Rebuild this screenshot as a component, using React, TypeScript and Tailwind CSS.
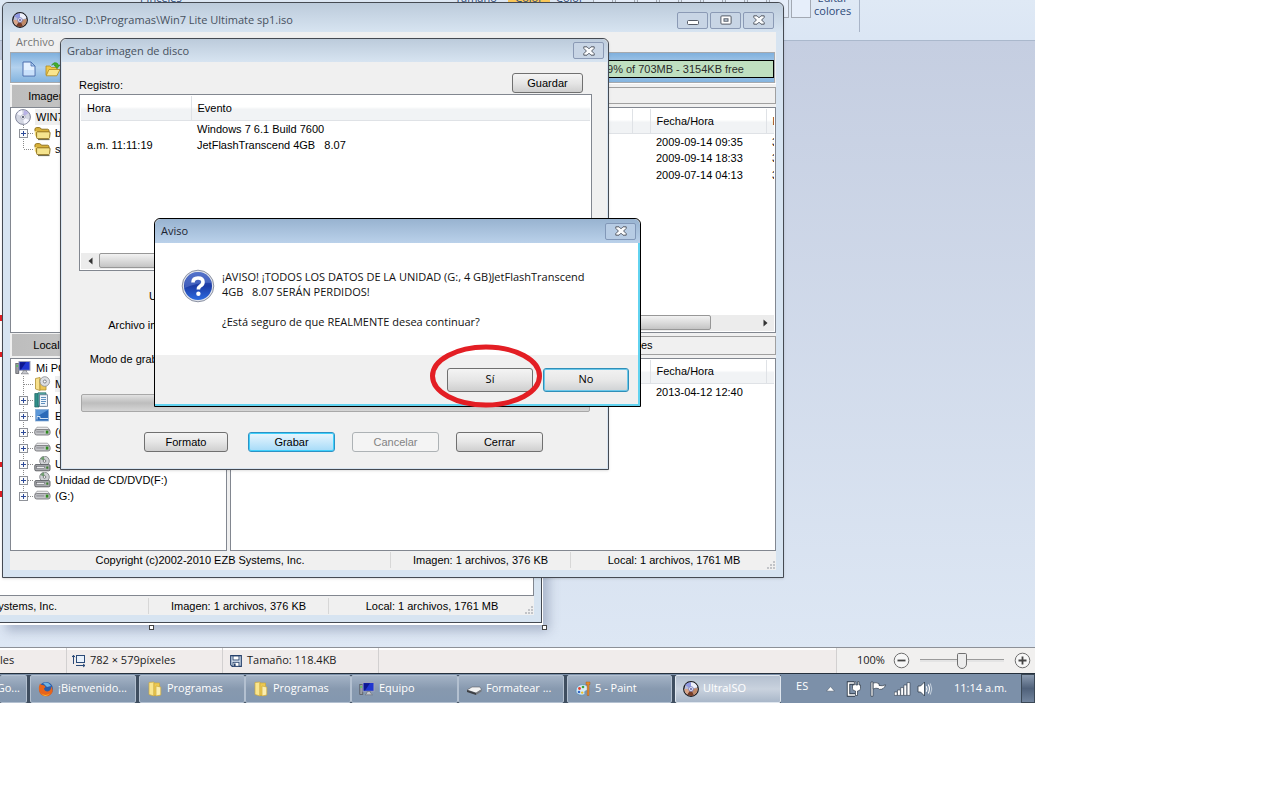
import type { ReactNode } from "react";

const SEGOE = "font-['Open_Sans','Noto_Sans',sans-serif]";
const MSSANS = "font-['Liberation_Sans',Arial,sans-serif]";

/* ---------- icons ---------- */

function DiscAppIcon() {
  return (
    <svg width="16" height="16" viewBox="0 0 16 16" className="shrink-0" aria-hidden="true">
      <circle cx="8" cy="8" r="7.3" fill="#b9bdd6" stroke="#1b1b1f" strokeWidth="1.3" />
      <path d="M8 8 L2 4 A7 7 0 0 1 8 1.2 Z" fill="#8e97e0" />
      <path d="M8 8 L8 1.2 A7 7 0 0 1 14.5 6 Z" fill="#eef0fa" />
      <path d="M8 8 L14.6 7 A7 7 0 0 1 11 14 Z" fill="#c08a68" />
      <path d="M8 8 L11 14.3 A7 7 0 0 1 4 13.5 Z" fill="#7a3f27" />
      <path d="M8 8 L4 13.5 A7 7 0 0 1 1.3 8 Z" fill="#d9a587" />
      <circle cx="8" cy="8" r="2.4" fill="#e9e9f8" stroke="#7276b8" strokeWidth="0.8" />
      <circle cx="8" cy="8" r="0.9" fill="#4f539a" />
    </svg>
  );
}

function DiscIcon() {
  return (
    <svg width="16" height="16" viewBox="0 0 16 16" className="shrink-0" aria-hidden="true">
      <circle cx="8" cy="8" r="7.4" fill="#d3d6e2" stroke="#80849a" strokeWidth="1" />
      <path d="M8 8 L2 5 A7 7 0 0 1 7 1.2 Z" fill="#f7f7ff" />
      <path d="M8 8 L14 11 A7 7 0 0 1 9 14.8 Z" fill="#f7f7ff" />
      <path d="M8 8 L9 1.2 A7 7 0 0 1 13.5 4 Z" fill="#b9b2e6" />
      <circle cx="8" cy="8" r="2.2" fill="#fff" stroke="#9a9cb2" strokeWidth="0.7" />
      <circle cx="8" cy="8" r="1" fill="#333a55" />
    </svg>
  );
}

function FolderIcon() {
  return (
    <svg width="17" height="16" viewBox="0 0 17 16" className="shrink-0" aria-hidden="true">
      <path d="M0.8 5 Q0.8 2.6 2.6 2.6 H5.4 Q6.6 2.6 7.4 4.2 H13.6 Q15 4.2 15 5.8 V11 H3 Z" fill="#d9b23a" stroke="#8a6b17" strokeWidth="0.9" />
      <path d="M0.8 6 V9.5 Q1 11.6 3 12 L3 6 Z" fill="#f1d875" />
      <path d="M3.2 6.8 H15 Q16.2 6.8 16.1 8 L15.6 12.4 Q15.5 13.6 14.3 13.6 H3.8 Q2.6 13.6 2.6 12.4 V7.4 Q2.6 6.8 3.2 6.8 Z" fill="#f5e48e" stroke="#8a6b17" strokeWidth="0.9" />
      <path d="M4 14.6 H15.5" stroke="#55502f" strokeWidth="0.9" />
    </svg>
  );
}

function DriveIcon() {
  return (
    <svg width="17" height="16" viewBox="0 0 17 16" className="shrink-0" aria-hidden="true">
      <path d="M3 3.2 H13.5 L16 6.2 H0.8 Z" fill="#ececee" stroke="#8a8a8e" strokeWidth="0.7" />
      <rect x="0.7" y="5.6" width="15.4" height="5.4" rx="2" fill="#c4c5c9" stroke="#67686c" strokeWidth="0.8" />
      <rect x="2.3" y="7.2" width="8" height="1.4" fill="#97989d" />
      <rect x="11.8" y="6.6" width="2.6" height="3" fill="#2f8a1e" />
    </svg>
  );
}

function CdDriveIcon() {
  return (
    <svg width="17" height="16" viewBox="0 0 17 16" className="shrink-0" aria-hidden="true">
      <circle cx="10.5" cy="5" r="4.8" fill="#cfd1d4" stroke="#77797e" strokeWidth="0.8" />
      <path d="M10.5 5 L6.5 3 A4.5 4.5 0 0 1 10 0.6 Z" fill="#6f9c6f" />
      <circle cx="10.5" cy="5" r="1.3" fill="#fff" stroke="#55575c" strokeWidth="0.7" />
      <rect x="0.8" y="8.6" width="15.2" height="6.2" rx="1.2" fill="#a9abaf" stroke="#56585c" strokeWidth="0.9" />
      <rect x="2.5" y="10.5" width="8" height="2.2" fill="#ececee" stroke="#55575c" strokeWidth="0.5" />
      <rect x="12.3" y="10.5" width="2" height="2.2" fill="#3b7f2d" />
    </svg>
  );
}

function DiscFolderIcon() {
  return (
    <svg width="17" height="16" viewBox="0 0 17 16" className="shrink-0" aria-hidden="true">
      <path d="M1.5 2.5 L6 1.5 V14.5 L1.5 13 Z" fill="#f7e08c" stroke="#b08f33" strokeWidth="0.8" />
      <path d="M6 3 H12 V14 H6 Z" fill="#ecc552" stroke="#b08f33" strokeWidth="0.8" />
      <circle cx="10.8" cy="5.5" r="4.8" fill="#dcdee2" stroke="#898b90" strokeWidth="0.8" />
      <circle cx="10.8" cy="5.5" r="1.5" fill="#fff" stroke="#66686d" strokeWidth="0.8" />
    </svg>
  );
}

function DocsIcon() {
  return (
    <svg width="17" height="16" viewBox="0 0 17 16" className="shrink-0" aria-hidden="true">
      <path d="M0.8 1.5 H5 V15 H0.8 Z" fill="#2f8f8a" stroke="#1f6662" strokeWidth="0.7" />
      <path d="M4 0.8 H12 V14 H4 Z" fill="#59b1ab" stroke="#1f6662" strokeWidth="0.7" />
      <rect x="5.5" y="2.8" width="8" height="11.5" fill="#eef5fb" stroke="#60738a" strokeWidth="0.8" />
      <path d="M7 5.5 H12 M7 7.5 H12 M7 9.5 H12 M7 11.5 H11" stroke="#4e84b8" strokeWidth="0.9" />
    </svg>
  );
}

function DesktopIcon() {
  return (
    <svg width="17" height="16" viewBox="0 0 17 16" className="shrink-0" aria-hidden="true">
      <rect x="1.5" y="1.5" width="13" height="11.5" fill="#2a6ab8" stroke="#8eb2d8" strokeWidth="0.8" />
      <path d="M2 2 H14 L2 9 Z" fill="#5b97d8" />
      <path d="M3 11.5 V8.5 H6 V10.5 H14" stroke="#cfe2f4" strokeWidth="1" fill="none" />
    </svg>
  );
}

function ComputerIcon() {
  return (
    <svg width="16" height="16" viewBox="0 0 16 16" className="shrink-0" aria-hidden="true">
      <rect x="0.8" y="3.5" width="3" height="10" fill="#9b9da3" stroke="#4f5158" strokeWidth="0.7" />
      <rect x="4" y="1.5" width="11" height="8.8" fill="#1f36d0" stroke="#9fa3b8" strokeWidth="1" />
      <path d="M4.8 2.2 H11 L6 9.5 H4.8 Z" fill="#0d1890" />
      <path d="M8 10.5 H11.5 V12 L13.5 13.8 H6 L8 12 Z" fill="#c6c8ce" stroke="#6d6f76" strokeWidth="0.6" />
      <rect x="1.5" y="5" width="1.2" height="2" fill="#49d04a" />
    </svg>
  );
}

function NewDocIcon() {
  return (
    <svg width="14" height="16" viewBox="0 0 14 16" className="shrink-0" aria-hidden="true">
      <path d="M1 1 H9 L13 5 V15 H1 Z" fill="#e4f1ff" stroke="#4a6fae" strokeWidth="1" />
      <path d="M9 1 V5 H13 Z" fill="#a9c9ee" stroke="#4a6fae" strokeWidth="0.8" />
      <path d="M2 9 H12 V14 H2 Z" fill="#c9e1fb" />
    </svg>
  );
}

function OpenFolderIcon() {
  return (
    <svg width="17" height="16" viewBox="0 0 17 16" className="shrink-0" aria-hidden="true">
      <path d="M1 5 H5 L6.5 6.5 H12 V14 H1 Z" fill="#efc94e" stroke="#b18b20" strokeWidth="0.8" />
      <path d="M4 8.5 H15 L11.8 14.8 H1.2 Z" fill="#fae58d" stroke="#b18b20" strokeWidth="0.8" />
      <path d="M6.5 4.2 Q8.5 0.4 12 2 Q13 2.6 13.2 4 H15 L12 7.6 L9 4 H10.8 Q9.5 2.6 6.5 4.2 Z" fill="#43b32c" stroke="#28831a" strokeWidth="0.5" />
    </svg>
  );
}

function QuestionIcon() {
  return (
    <svg width="34" height="34" viewBox="0 0 34 34" className="shrink-0" aria-hidden="true">
      <defs>
        <linearGradient id="qg" x1="0" y1="0" x2="0" y2="1">
          <stop offset="0" stopColor="#3d5fc0" />
          <stop offset="0.5" stopColor="#1c3ca6" />
          <stop offset="1" stopColor="#2c6be0" />
        </linearGradient>
      </defs>
      <circle cx="17" cy="17" r="15.8" fill="#dfe3ec" stroke="#8d93a3" strokeWidth="1" />
      <circle cx="17" cy="17" r="14" fill="url(#qg)" />
      <path d="M3.5 15 A13.7 13.7 0 0 1 30.5 14 Q18 13 3.5 19 Z" fill="#6f8ad6" opacity="0.45" />
      <path d="M12 13.5 Q12 9 17 9 Q22 9 22 13 Q22 15.5 19.3 17 Q17.4 18.2 17.4 20.5" fill="none" stroke="#fff" strokeWidth="3.6" />
      <circle cx="17.4" cy="24.8" r="2.2" fill="#fff" />
    </svg>
  );
}

function FirefoxIcon() {
  return (
    <svg width="16" height="16" viewBox="0 0 16 16" className="shrink-0" aria-hidden="true">
      <circle cx="8" cy="8" r="7" fill="#2b5ca8" />
      <path d="M5 2 A7 7 0 0 1 13 5 L9 6 Z" fill="#6fb2e2" />
      <path d="M2 2.5 Q3 4 4.5 4 Q6.5 4 7.5 6 L6 7.5 Q6.5 10.5 9.5 10.5 Q13 10 13.2 5.5 Q15.8 9 14 12 Q11.5 15.8 7.5 15.3 Q2 14.6 1 9.5 Q0.4 5.5 2 2.5 Z" fill="#e8641b" />
      <path d="M3 12 Q7 15.5 12 12.6 Q9 16 5.5 14.6 Z" fill="#f7b52c" />
    </svg>
  );
}

function TaskFolderIcon() {
  return (
    <svg width="16" height="16" viewBox="0 0 16 16" className="shrink-0" aria-hidden="true">
      <path d="M2 1.5 L7 1 V15 L2 13.5 Z" fill="#f9e58e" stroke="#cda93c" strokeWidth="0.7" />
      <path d="M7 2 H12.5 V14.5 H7 Z" fill="#edc951" stroke="#cda93c" strokeWidth="0.7" />
      <path d="M9 5 L13.8 6 V14 L9 15 Z" fill="#fbeeb0" stroke="#cda93c" strokeWidth="0.7" />
    </svg>
  );
}

function TaskDriveIcon() {
  return (
    <svg width="16" height="16" viewBox="0 0 16 16" className="shrink-0" aria-hidden="true">
      <path d="M1 9 L6 6 H14 L15.5 8.5 L10 12 Z" fill="#f2f2f2" stroke="#5a5d62" strokeWidth="0.6" />
      <path d="M1 9 L10 12 V14 L1 11 Z" fill="#3c3f44" />
      <path d="M10 12 L15.5 8.5 V10.5 L10 14 Z" fill="#75787d" />
    </svg>
  );
}

function PaintIcon() {
  return (
    <svg width="16" height="16" viewBox="0 0 16 16" className="shrink-0" aria-hidden="true">
      <path d="M1 10 Q1 4 7.5 3.5 Q13 3.5 13 8 Q13 10 10.5 10 Q9 10.5 10 12 Q10.5 14 7 14.2 Q1 14 1 10 Z" fill="#d8ebf6" stroke="#5d93b7" strokeWidth="0.8" />
      <circle cx="4.5" cy="7.5" r="1.4" fill="#e04331" />
      <circle cx="8" cy="6" r="1.3" fill="#3ca43a" />
      <circle cx="4" cy="11" r="1.3" fill="#3166c9" />
      <circle cx="7.2" cy="11.6" r="1.2" fill="#efc22c" />
      <path d="M11 1 H15 V3.5 H14 V14.5 H12.2 V3.5 H11 Z" fill="#e58a2d" stroke="#9c5713" strokeWidth="0.4" />
    </svg>
  );
}

function SizeIcon() {
  return (
    <svg width="14" height="14" viewBox="0 0 14 14" className="shrink-0" aria-hidden="true">
      <rect x="4.5" y="1.5" width="8" height="7" fill="#e8f1fb" stroke="#2a4a78" strokeWidth="1" />
      <path d="M1.5 10 V1.5 M0 3.2 L1.5 1.2 L3 3.2 M4 11.5 H13 M11 10 L13 11.5 L11 13" fill="none" stroke="#2a4a78" strokeWidth="1" />
    </svg>
  );
}

function SaveIcon() {
  return (
    <svg width="12" height="12" viewBox="0 0 12 12" className="shrink-0" aria-hidden="true">
      <path d="M0.7 0.7 H11.3 V11.3 H2.2 L0.7 9.8 Z" fill="#dbe7f5" stroke="#27426c" strokeWidth="1.2" />
      <rect x="3" y="1" width="6" height="4" fill="#fff" stroke="#27426c" strokeWidth="0.9" />
      <rect x="3" y="7.3" width="6" height="4" fill="#fff" stroke="#27426c" strokeWidth="0.9" />
      <rect x="4" y="8.5" width="1.6" height="2.5" fill="#27426c" />
    </svg>
  );
}

function CloseGlyph() {
  return (
    <svg width="12" height="10" viewBox="0 0 12 10" aria-hidden="true">
      <path
        d="M0.8 0.8 H4 L6 2.8 L8 0.8 H11.2 V2.4 L8.6 5 L11.2 7.6 V9.2 H8 L6 7.2 L4 9.2 H0.8 V7.6 L3.4 5 L0.8 2.4 Z"
        fill="#fbfcfd"
        stroke="#555b66"
        strokeWidth="1"
      />
    </svg>
  );
}

function MinGlyph() {
  return (
    <svg width="12" height="10" viewBox="0 0 12 10" aria-hidden="true">
      <rect x="0.5" y="5.5" width="11" height="4" rx="1" fill="#fff" stroke="#555b66" />
    </svg>
  );
}

function MaxGlyph() {
  return (
    <svg width="12" height="10" viewBox="0 0 12 10" aria-hidden="true">
      <rect x="0.9" y="0.9" width="10.2" height="8.2" rx="1" fill="#fff" stroke="#555b66" />
      <rect x="4" y="3.8" width="4" height="2.4" fill="#c7d4e3" stroke="#555b66" />
    </svg>
  );
}

function Grip() {
  return (
    <svg width="9" height="9" viewBox="0 0 9 9" className="shrink-0" aria-hidden="true">
      <path
        d="M6 0h2v2h-2z M6 3h2v2h-2z M3 3h2v2h-2z M6 6h2v2h-2z M3 6h2v2h-2z M0 6h2v2h-2z"
        fill="#c2c4c8"
      />
    </svg>
  );
}

/* ---------- window parts ---------- */

function CaptionButton({ label, active, children }: { label: string; active?: boolean; children: ReactNode }) {
  return (
    <button
      aria-label={label}
      className={`flex h-[17px] w-[31px] items-center justify-center rounded-xs border ${
        active ? "border-[#8298b8] bg-[#b7cce4]" : "border-[#8b9ab5] bg-[#c8d5e5]"
      }`}
    >
      {children}
    </button>
  );
}

function PushButton({
  children,
  width,
  look = "normal",
  height = "h-5",
}: {
  children: ReactNode;
  width: string;
  look?: "normal" | "pressed" | "default" | "disabled";
  height?: string;
}) {
  const looks = {
    normal: "border-[#707070] bg-linear-to-b from-[#f4f4f4] via-[#e6e6e6] to-[#cfcfcf] text-black",
    pressed: "border-[#2c92c5] ring-1 ring-inset ring-[#3fd0fb] bg-linear-to-b from-[#eaf6fd] to-[#a5dbf8] text-black",
    default: "border-[#2f8fb8] ring-1 ring-inset ring-[#6cc8ea] bg-linear-to-b from-[#f2f2f2] via-[#e8e8e8] to-[#cfd2d4] text-black",
    disabled: "border-[#adb2b5] bg-[#f4f4f4] text-[#838383]",
  };
  return (
    <button
      disabled={look === "disabled"}
      className={`flex ${height} ${width} items-center justify-center rounded-[3px] border ${looks[look]}`}
    >
      {children}
    </button>
  );
}

function ScrollBar({ thumb }: { thumb: string }) {
  return (
    <div className="flex h-4 items-stretch bg-[#ececec]">
      <button aria-label="Desplazar a la izquierda" className="flex w-[18px] items-center justify-center">
        <svg width="5" height="8" viewBox="0 0 5 8" aria-hidden="true">
          <path d="M4.5 0.5 V7.5 L0.5 4 Z" fill="#333" />
        </svg>
      </button>
      <div className="flex-1">
        <div
          className={`h-[15px] rounded-xs border border-[#979797] bg-linear-to-b from-[#f2f2f2] via-[#dcdcdc] to-[#c4c4c4] ${thumb}`}
        />
      </div>
      <button aria-label="Desplazar a la derecha" className="flex w-[18px] items-center justify-center">
        <svg width="5" height="8" viewBox="0 0 5 8" aria-hidden="true">
          <path d="M0.5 0.5 V7.5 L4.5 4 Z" fill="#333" />
        </svg>
      </button>
    </div>
  );
}

type Column = { title: string; width: string };

function ListView({ columns, rows, label }: { columns: Column[]; rows: string[][]; label: string }) {
  return (
    <table aria-label={label} className="w-full table-fixed border-collapse text-left">
      <thead>
        <tr className="h-[24px]">
          {columns.map((c, i) => (
            <th
              key={i}
              className={`${c.width} overflow-hidden border-r border-b border-[#dfe2e6] bg-linear-to-b from-white from-45% to-[#f1f3f5] to-55% p-0 pl-[6px] font-normal whitespace-nowrap last:border-r-0`}
            >
              {c.title}
            </th>
          ))}
        </tr>
      </thead>
      <tbody>
        {rows.map((r, i) => (
          <tr key={i} className="h-[17px]">
            {r.map((cell, j) => (
              <td key={j} className="overflow-hidden p-0 pl-[6px] whitespace-pre">
                {cell}
              </td>
            ))}
          </tr>
        ))}
      </tbody>
    </table>
  );
}

type Node = { text: string; icon: ReactNode; expandable?: boolean; selected?: boolean };

function Tree({ root, rootIcon, rootSelected, nodes }: { root: string; rootIcon: ReactNode; rootSelected?: boolean; nodes: Node[] }) {
  return (
    <ul className="pt-px leading-4 whitespace-nowrap">
      <li className="flex h-4 items-center gap-1 pl-1">
        {rootIcon}
        <span className={rootSelected ? "bg-[#efefef] px-px" : "px-px"}>{root}</span>
      </li>
      {nodes.map((n, i) => (
        <li key={i} className="flex h-4 items-center pl-2">
          <svg width="15" height="16" viewBox="0 0 15 16" className="shrink-0" aria-hidden="true">
            <path
              d={i === nodes.length - 1 ? "M4.5 0 V8" : "M4.5 0 V16"}
              stroke="#8a8a8a"
              strokeDasharray="1 1"
            />
            <path d="M5 8.5 H15" stroke="#8a8a8a" strokeDasharray="1 1" />
            {n.expandable && (
              <>
                <rect x="0.5" y="4.5" width="8" height="8" fill="#fbfbfb" stroke="#8f9299" />
                <path d="M2 8.5 H7 M4.5 6 V11" stroke="#2d4a98" />
              </>
            )}
          </svg>
          {n.icon}
          <span className={`ml-1 ${n.selected ? "bg-[#efefef]" : ""}`}>{n.text}</span>
        </li>
      ))}
    </ul>
  );
}

function StatusCells({ cells }: { cells: { text: string; width: string }[] }) {
  return (
    <div className="flex h-[19px] items-center bg-[#f0f0f0]">
      {cells.map((c, i) => (
        <div
          key={i}
          className={`h-4 border-r border-[#d7d7d7] text-center leading-4 whitespace-nowrap last-of-type:border-r-0 ${c.width}`}
        >
          {c.text}
        </div>
      ))}
      <span className="-ml-[10px] self-end">
        <Grip />
      </span>
    </div>
  );
}

/* ---------- windows ---------- */

function MainWindow() {
  const sections = [
    {
      title: "Imagen:",
      path: "",
      box: "h-[226px]",
      tree: (
        <Tree
          root="WIN7LITE"
          rootSelected
          rootIcon={<DiscIcon />}
          nodes={[
            { text: "boot", icon: <FolderIcon />, expandable: true },
            { text: "sources", icon: <FolderIcon /> },
          ]}
        />
      ),
      rows: [
        ["", "", "2009-09-14 09:35", "3"],
        ["", "", "2009-09-14 18:33", "3"],
        ["", "", "2009-07-14 04:13", "3"],
      ],
      last: "LBA",
      scroll: true,
    },
    {
      title: "Local:",
      path: "es",
      box: "h-[193px]",
      tree: (
        <Tree
          root="Mi PC"
          rootIcon={<ComputerIcon />}
          nodes={[
            { text: "Mis", icon: <DiscFolderIcon />, selected: true },
            { text: "Mis", icon: <DocsIcon />, expandable: true },
            { text: "Esc", icon: <DesktopIcon />, expandable: true },
            { text: "(C:)", icon: <DriveIcon />, expandable: true },
            { text: "Sis", icon: <DriveIcon />, expandable: true },
            { text: "Uni", icon: <CdDriveIcon />, expandable: true },
            { text: "Unidad de CD/DVD(F:)", icon: <CdDriveIcon />, expandable: true },
            { text: "(G:)", icon: <DriveIcon />, expandable: true },
          ]}
        />
      ),
      rows: [["", "", "2013-04-12 12:40", ""]],
      last: "",
      scroll: false,
    },
  ];

  return (
    <section
      aria-label="UltraISO"
      className="absolute top-[2px] left-[2px] flex h-[576px] w-[782px] flex-col rounded-t-md border border-[#454a52] bg-[#d7e4f1] px-[7px] pb-[7px] shadow-sm"
    >
      <header className={`-mx-[7px] flex h-[29px] shrink-0 items-center gap-[5px] rounded-t-md bg-linear-to-b from-[#bccbdb] to-[#d7e4f1] px-[9px] pt-[5px] text-xs text-[#47515e] ${SEGOE}`}>
        <DiscAppIcon />
        <h1 className="flex-1 text-[11px] leading-4">UltraISO - D:\Programas\Win7 Lite Ultimate sp1.iso</h1>
        <div className="flex gap-[2px]">
          <CaptionButton label="Minimizar"><MinGlyph /></CaptionButton>
          <CaptionButton label="Maximizar"><MaxGlyph /></CaptionButton>
          <CaptionButton label="Cerrar"><CloseGlyph /></CaptionButton>
        </div>
      </header>
      <div className="flex flex-1 flex-col overflow-hidden bg-[#f0f0f0]">
        <nav className={`flex h-[19px] items-center gap-4 px-[6px] text-[11px] leading-4 text-[#757575] ${SEGOE}`}>
          {["Archivo", "Acciones", "Arranque", "Herramientas", "Opciones", "Ayuda"].map((m) => (
            <a key={m} href="#">{m}</a>
          ))}
        </nav>
        <div className="mt-px mr-px flex h-[31px] items-center gap-[9px] border border-[#a5a9ae] bg-linear-to-b from-[#7fb0dd] via-[#b4d2ee] to-[#84b4df] pt-[2px] pl-[11px]">
          <button aria-label="Nuevo"><NewDocIcon /></button>
          <button aria-label="Abrir"><OpenFolderIcon /></button>
          <div className="ml-auto h-[18px] w-[300px] border border-black bg-[#bfdfc0] pr-[29px] text-right leading-4 text-[#2b2b2b]">
            99% of 703MB - 3154KB free
          </div>
        </div>
        <div className="h-px bg-white" />
        {sections.map((s) => (
          <div key={s.title} className="grid grid-cols-[217px_1fr] gap-x-[3px]">
            <h2 className="mt-px ml-[2px] flex h-[22px] items-center bg-linear-to-r from-[#bdbdbd] to-[#d4d4d4]">
              <span className="w-[72px] text-center">{s.title}</span>
            </h2>
            <div className="my-[3px] flex items-center border border-[#a0a0a0] bg-[#f0f0f0] pl-[410px]">
              {s.path}
            </div>
            <div className={`overflow-hidden border border-[#828790] bg-white ${s.box}`}>{s.tree}</div>
            <div className={`flex flex-col justify-between overflow-hidden border border-[#828790] bg-white p-px ${s.box}`}>
              <ListView
                label={s.title}
                columns={[
                  { title: "", width: "w-[400px]" },
                  { title: "", width: "w-[18px]" },
                  { title: "Fecha/Hora", width: "w-[116px]" },
                  { title: s.last, width: "w-auto" },
                ]}
                rows={s.rows}
              />
              {s.scroll && <ScrollBar thumb="w-[461px]" />}
            </div>
          </div>
        ))}
        <StatusCells
          cells={[
            { text: "Copyright (c)2002-2010 EZB Systems, Inc.", width: "w-[381px]" },
            { text: "Imagen: 1 archivos, 376 KB", width: "w-[180px]" },
            { text: "Local: 1 archivos, 1761 MB", width: "flex-1" },
          ]}
        />
      </div>
    </section>
  );
}

function BurnDialog() {
  return (
    <section
      aria-label="Grabar imagen de disco"
      className="absolute top-[38px] left-[60px] flex h-[432px] w-[549px] flex-col rounded-t-md border border-[#454a52] bg-[#f0f0f0] shadow-sm"
    >
      <header className={`flex h-[23px] shrink-0 items-center justify-between rounded-t-md bg-linear-to-b from-[#bccbdb] to-[#d7e4f1] pr-1 pl-[6px] text-[#47515e] ${SEGOE}`}>
        <h2 className="text-[11px] leading-4">Grabar imagen de disco</h2>
        <CaptionButton label="Cerrar"><CloseGlyph /></CaptionButton>
      </header>
      <div className="flex flex-1 flex-col border-x border-b border-[#d7e4f1] px-[17px]">
        <div className="flex h-8 items-end justify-between pr-[7px]">
          <span className="pb-px leading-4">Registro:</span>
          <div className="pb-px">
            <PushButton width="w-[71px]">Guardar</PushButton>
          </div>
        </div>
        <div className="flex h-[177px] w-[513px] flex-col justify-between border border-[#828790] bg-white p-px">
          <ListView
            label="Registro"
            columns={[
              { title: "Hora", width: "w-[110px]" },
              { title: "Evento", width: "w-auto" },
            ]}
            rows={[
              ["", "Windows 7 6.1 Build 7600"],
              ["a.m. 11:11:19", "JetFlashTranscend 4GB   8.07"],
            ]}
          />
          <ScrollBar thumb="w-[440px]" />
        </div>
        <div className="flex h-[123px] w-[108px] flex-col items-end pt-[17px] leading-4 whitespace-nowrap">
          <span>Unidad:</span>
          <span className="mt-[13px]">Archivo imagen:</span>
          <span className="mt-[18px]">Modo de grabación:</span>
        </div>
        <div className="ml-[2px] h-[18px] w-[509px] rounded-xs border border-[#a8a8a8] bg-linear-to-b from-[#e2e2e2] via-[#bdbdbd] to-[#d6d6d6]" />
        <div className="mt-5 flex pl-[65px]">
          <PushButton width="w-[84px]">Formato</PushButton>
          <div className="ml-5 flex gap-[17px]">
            <PushButton width="w-[87px]" look="pressed">Grabar</PushButton>
            <PushButton width="w-[87px]" look="disabled">Cancelar</PushButton>
            <PushButton width="w-[87px]">Cerrar</PushButton>
          </div>
        </div>
      </div>
    </section>
  );
}

function WarningDialog() {
  return (
    <section
      role="dialog"
      aria-label="Aviso"
      className={`absolute top-[218px] left-[154px] flex h-[189px] w-[487px] flex-col rounded-t-md border border-black bg-[#f0f0f0] text-[11px] ${SEGOE}`}
    >
      <header className="flex h-6 shrink-0 items-center justify-between rounded-t-md bg-linear-to-b from-[#98b3d0] to-[#bad1ea] pr-1 pl-[6px] text-[#1c2430]">
        <h2 className="leading-4">Aviso</h2>
        <CaptionButton label="Cerrar" active><CloseGlyph /></CaptionButton>
      </header>
      <div className="flex flex-1 flex-col border-r-2 border-b-2 border-[#62d3f0]">
        <div className="flex h-[112px] gap-[7px] bg-white pt-[26px] pl-[26px]">
          <QuestionIcon />
          <p className="leading-[15px] whitespace-pre text-[#111]">
            {"¡AVISO! ¡TODOS LOS DATOS DE LA UNIDAD (G:, 4 GB)JetFlashTranscend\n4GB   8.07 SERÁN PERDIDOS!\n\n¿Está seguro de que REALMENTE desea continuar?"}
          </p>
        </div>
        <div className="flex flex-1 items-center justify-end gap-[10px] pr-[9px]">
          <PushButton width="w-[86px]" height="h-6">Sí</PushButton>
          <PushButton width="w-[86px]" height="h-6" look="default">No</PushButton>
        </div>
      </div>
      <svg width="112" height="64" viewBox="0 0 112 64" className="pointer-events-none absolute top-[125px] left-[275px]" aria-hidden="true">
        <ellipse cx="56" cy="32" rx="53.5" ry="29" fill="none" stroke="#e31e24" strokeWidth="5" />
      </svg>
    </section>
  );
}

/* ---------- Paint behind the windows ---------- */

function Ribbon() {
  return (
    <div className={`flex h-[41px] items-start overflow-hidden border-b border-[#aab8cc] bg-linear-to-b from-[#dfe9f5] to-[#dbe6f4] text-[11px] leading-[13px] text-[#2d4a78] ${SEGOE}`}>
      <div className="-mt-[9px] flex w-[590px] pl-[140px]">
        <span className="w-[315px]">Pinceles</span>
        <span className="w-[53px]">Tamaño</span>
        <span className="mr-[6px] w-[42px] bg-[#fbc859] text-center">Color</span>
        <span>Color</span>
      </div>
      <div className="flex w-[224px] justify-end gap-[2px] pr-[3px]">
        {Array.from({ length: 10 }, (_, i) => (
          <span key={i} className="h-[18px] w-5 border border-t-0 border-[#a3a9b3] bg-[#e6eefa]" />
        ))}
      </div>
      <div className="-mt-[9px] h-[41px] border-r border-[#a9b5c8] pr-2 text-center">
        Editar
        <br />
        colores
      </div>
    </div>
  );
}

function PaintCanvas() {
  return (
    <>
      <div className="absolute top-[60px] left-0 flex h-[565px] w-[543px] flex-col bg-white pb-[2px] pr-px shadow-[6px_6px_10px_rgba(110,125,155,0.45)]">
        <div className="flex flex-1 flex-col border-r border-b border-[#454a52] bg-[#d7e4f1] pr-[7px] pb-[7px]">
          <div className="flex flex-1 flex-col border-r border-b border-[#828790] bg-white pt-[255px]">
            <i className="h-[6px] w-[2px] bg-[#e31e24]" />
            <i className="mt-[31px] h-[5px] w-[2px] bg-[#e31e24]" />
            <i className="mt-[105px] h-[5px] w-[2px] bg-[#e31e24]" />
            <i className="mt-[24px] h-[6px] w-[2px] bg-[#e31e24]" />
          </div>
          <StatusCells
            cells={[
              { text: "Systems, Inc.", width: "flex w-[149px] justify-end pr-[91px]" },
              { text: "Imagen: 1 archivos, 376 KB", width: "w-[180px]" },
              { text: "Local: 1 archivos, 1761 MB", width: "flex-1" },
            ]}
          />
        </div>
      </div>
      <i className="absolute top-[625px] left-[149px] size-[5px] border border-[#444] bg-white" />
      <i className="absolute top-[625px] left-[542px] size-[5px] border border-[#444] bg-white" />
    </>
  );
}

function PaintStatus() {
  return (
    <div className={`flex h-[26px] items-stretch border-t border-[#8c9097] bg-[#f0eceb] text-[11px] text-[#1b1b1b] shadow-[inset_0_2px_0_#fff] ${SEGOE}`}>
      <div className="flex w-[67px] items-center border-r border-[#d2d0d0]">les</div>
      <div className="flex w-[156px] items-center gap-1 border-r border-[#d2d0d0] pl-[5px]">
        <SizeIcon />
        782 × 579píxeles
      </div>
      <div className="flex w-[156px] items-center gap-[5px] border-r border-[#d2d0d0] pl-[7px]">
        <SaveIcon />
        Tamaño: 118.4KB
      </div>
      <div className="flex-1 border-r border-[#d2d0d0]" />
      <div className="flex w-[198px] items-center bg-[#f1f0ef] pr-1 pl-5">
        <label htmlFor="zoom" className="w-9">100%</label>
        <button aria-label="Alejar">
          <svg width="17" height="17" viewBox="0 0 17 17" aria-hidden="true">
            <circle cx="8.5" cy="8.5" r="7.3" fill="#f7f7f7" stroke="#6e6e6e" />
            <path d="M4.5 8.5 H12.5" stroke="#444" strokeWidth="1.8" />
          </svg>
        </button>
        <input
          id="zoom"
          type="range"
          defaultValue={50}
          className="mx-[10px] h-4 w-[84px] appearance-none bg-transparent [&::-webkit-slider-runnable-track]:h-[3px] [&::-webkit-slider-runnable-track]:border-t [&::-webkit-slider-runnable-track]:border-[#9b9b9b] [&::-webkit-slider-runnable-track]:bg-[#e4e4e4] [&::-webkit-slider-thumb]:-mt-[7px] [&::-webkit-slider-thumb]:h-4 [&::-webkit-slider-thumb]:w-[10px] [&::-webkit-slider-thumb]:appearance-none [&::-webkit-slider-thumb]:rounded-t-xs [&::-webkit-slider-thumb]:rounded-b-md [&::-webkit-slider-thumb]:border [&::-webkit-slider-thumb]:border-[#707070] [&::-webkit-slider-thumb]:bg-[#ececec]"
        />
        <button aria-label="Acercar" className="ml-auto">
          <svg width="17" height="17" viewBox="0 0 17 17" aria-hidden="true">
            <circle cx="8.5" cy="8.5" r="7.3" fill="#f7f7f7" stroke="#6e6e6e" />
            <path d="M4.5 8.5 H12.5 M8.5 4.5 V12.5" stroke="#444" strokeWidth="1.8" />
          </svg>
        </button>
      </div>
    </div>
  );
}

/* ---------- taskbar ---------- */

function Task({ icon, text, width, active }: { icon?: ReactNode; text: string; width: string; active?: boolean }) {
  return (
    <button
      className={`flex h-7 items-center gap-1 overflow-hidden rounded-xs border pl-[7px] whitespace-nowrap ${width} ${
        active
          ? "border-[#dfe6ee] bg-linear-to-b from-[#b4c0d0] via-[#c9d2de] to-[#a9b7c9]"
          : "border-[#b3c0d0] bg-linear-to-b from-[#a3b2c5] via-[#8799af] to-[#8397af]"
      }`}
    >
      {icon}
      {text}
    </button>
  );
}

function Taskbar() {
  return (
    <footer className={`flex h-[30px] items-center border-t border-[#25303c] bg-[#7c90a9] text-[11px] text-white ${SEGOE}`}>
      <div className="flex gap-[3px] bg-[#3f4e60]">
        <button className="h-7 w-[27px] overflow-hidden rounded-xs border border-l-0 border-[#b3c0d0] bg-linear-to-b from-[#a3b2c5] via-[#8799af] to-[#8397af] whitespace-nowrap">
          <span className="flex justify-end pr-[6px]">Go...</span>
        </button>
        <Task icon={<FirefoxIcon />} text="¡Bienvenido..." width="w-[106px]" />
        <div className="flex">
          <Task icon={<TaskFolderIcon />} text="Programas" width="w-[106px]" />
          <Task icon={<TaskFolderIcon />} text="Programas" width="w-[106px]" />
          <Task icon={<ComputerIcon />} text="Equipo" width="w-[107px]" />
          <Task icon={<TaskDriveIcon />} text="Formatear ..." width="w-[106px]" />
        </div>
        <Task icon={<PaintIcon />} text="5 - Paint" width="w-[105px]" />
        <Task icon={<DiscAppIcon />} text="UltraISO" width="w-[106px]" active />
      </div>
      <div className="ml-auto flex h-full items-center">
        <span className="w-[30px] pb-1">ES</span>
        <button aria-label="Mostrar iconos ocultos" className="w-[20px]">
          <svg width="9" height="6" viewBox="0 0 9 6" aria-hidden="true">
            <path d="M4.5 0.6 L8.6 5.2 H0.4 Z" fill="#fff" stroke="#4b5a6c" strokeWidth="0.6" />
          </svg>
        </button>
        <svg width="16" height="16" viewBox="0 0 16 16" className="mr-2" aria-hidden="true">
          <path d="M8 2 H2.5 V14 H9" fill="none" stroke="#2f3b49" strokeWidth="3.4" />
          <path d="M8 2 H2.5 V14 H9" fill="none" stroke="#fff" strokeWidth="1.6" />
          <path d="M8.4 0.6 V4 H6.5 V7.5 Q6.5 10 9.5 10 V14.5 H11.5 V10 Q14.5 10 14.5 7.5 V4 H13 V0.6 H11.6 V4 H9.8 V0.6 Z" fill="#fff" stroke="#2f3b49" strokeWidth="0.7" />
        </svg>
        <svg width="17" height="16" viewBox="0 0 17 16" className="mr-[7px]" aria-hidden="true">
          <path d="M1 1 H3 V15.3 H1 Z" fill="#fff" stroke="#2f3b49" strokeWidth="0.7" />
          <path d="M3.2 2 Q6 1 9 2.6 V4.4 Q12 5.4 15.6 3.8 Q14 8.8 9.3 8.4 L8.6 7.6 Q6 6.6 3.2 8 Z" fill="#fff" stroke="#2f3b49" strokeWidth="0.7" />
        </svg>
        <svg width="17" height="14" viewBox="0 0 17 14" className="mr-[6px]" aria-hidden="true">
          <g fill="#fff" stroke="#2f3b49" strokeWidth="0.6">
            <path d="M0.3 10 h2.9 v3.4 h-2.9 z" />
            <path d="M3.5 8 h2.9 v5.4 h-2.9 z" />
            <path d="M6.7 5.6 h2.9 v7.8 h-2.9 z" />
            <path d="M9.9 3 h2.9 v10.4 h-2.9 z" />
            <path d="M13.1 0.6 h2.9 v12.8 h-2.9 z" />
          </g>
        </svg>
        <svg width="17" height="16" viewBox="0 0 17 16" aria-hidden="true">
          <path d="M1 5 H3.5 L7.5 1 V15 L3.5 11 H1 Z" fill="#fff" stroke="#2f3b49" strokeWidth="0.8" />
          <path d="M9.3 5.2 Q10.8 8 9.3 10.8 M11.3 3.6 Q13.6 8 11.3 12.4" fill="none" stroke="#fff" strokeWidth="1.1" />
          <path d="M13.3 2.4 Q16.2 8 13.3 13.6" fill="none" stroke="#dbe3ec" strokeWidth="0.8" />
        </svg>
        <time className="mr-[14px] ml-5 whitespace-nowrap">11:14 a.m.</time>
        <button
          aria-label="Mostrar escritorio"
          className="h-full w-[14px] border border-[#3b4856] bg-linear-to-b from-[#8b9bb0] via-[#50617a] to-[#71849d]"
        />
      </div>
    </footer>
  );
}

export default function App() {
  return (
    <div className="min-h-screen bg-white">
      <main className={`relative w-full max-w-[1035px] overflow-hidden text-[11px] text-black ${MSSANS}`}>
        <Ribbon />
        <div className="h-[606px] bg-linear-to-b from-[#c5cee1] to-[#dde7f4]" />
        <PaintCanvas />
        <PaintStatus />
        <Taskbar />
        <MainWindow />
        <BurnDialog />
        <WarningDialog />
      </main>
    </div>
  );
}
